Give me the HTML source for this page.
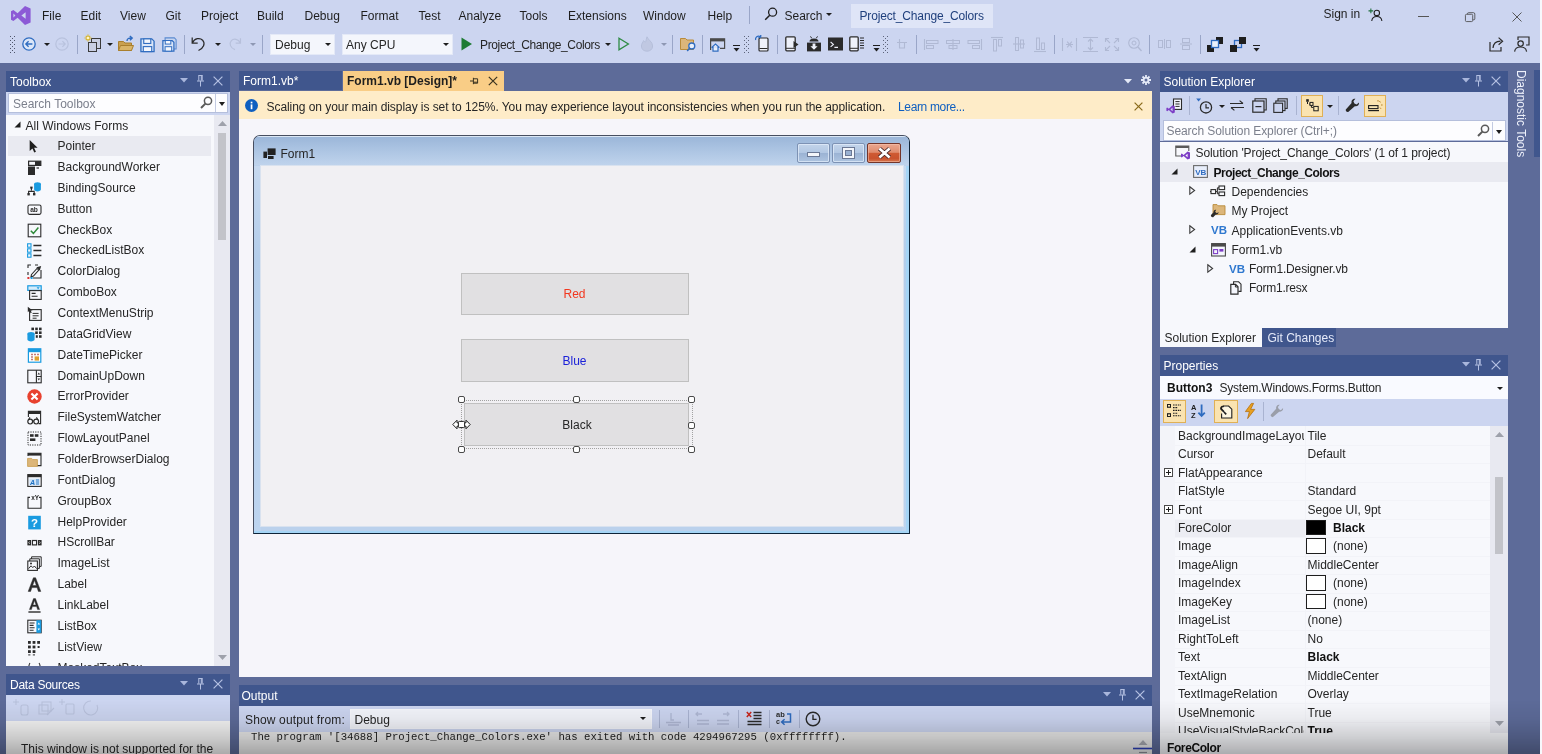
<!DOCTYPE html>
<html>
<head>
<meta charset="utf-8">
<title>Project_Change_Colors - Microsoft Visual Studio</title>
<style>
*{box-sizing:border-box;margin:0;padding:0}
html,body{width:1542px;height:754px;overflow:hidden}
body{font-family:"Liberation Sans",sans-serif;font-size:12px;color:#262626;background:#5d6b99;position:relative}
.a{position:absolute}
.t{position:absolute;white-space:pre;line-height:16px;height:16px}
.b{font-weight:bold;color:#111}
svg{position:absolute;overflow:visible}
#top{left:0;top:0;width:1542px;height:63px;background:#ccd5f0}
.menu .t{top:8px;color:#1e1e1e}
.sep{position:absolute;width:1px;background:#9aa6c8;top:35px;height:19px}
.combo{position:absolute;background:#f4f6fc;border:1px solid #e4e9f7;top:34px;height:21px}
.caret{position:absolute;width:0;height:0;border-left:3px solid transparent;border-right:3px solid transparent;border-top:4px solid #1e1e1e}
.ttl{position:absolute;background:#40568d;color:#fff;height:21px}
.ttl .t{top:3px;left:4px;color:#fff}
.pane{position:absolute;background:#f7f8fc}
.tb{position:absolute;background:#ccd5f0}
.row{position:absolute;left:0;height:21px;width:100%}
.row .t{left:51px;top:2px}
.h{position:absolute;width:7px;height:7px;background:#fff;border:1px solid #4a4a4a;border-radius:2px}
.gl{position:absolute;left:17px;right:0;height:1px;background:#eceef5}
</style>
</head>
<body>
<!-- TOP BAR -->
<div id="wrap" class="a" style="left:0;top:0;width:1542px;height:754px;will-change:transform">
<div id="top" class="a"></div>
<div class="a menu" style="left:0;top:0;width:1542px;height:30px">
<svg style="left:10.5px;top:5.5px" width="20" height="19" viewBox="0 0 20 19"><path d="M14 0 L19.6 2.4 V16.6 L14 19 L6.6 11.8 L2.4 15 L0 13.8 V5.2 L2.4 4 L6.6 7.2 Z" fill="#8c5ad6"/><path d="M14.6 6.2 L10.4 9.5 L14.6 12.8 Z" fill="#ccd5f0"/><path d="M2.4 7.6 V11.4 L4.4 9.5 Z" fill="#ccd5f0"/></svg>
<span class="t" style="left:42px">File</span>
<span class="t" style="left:80.5px">Edit</span>
<span class="t" style="left:120px">View</span>
<span class="t" style="left:165.5px">Git</span>
<span class="t" style="left:201px">Project</span>
<span class="t" style="left:257px">Build</span>
<span class="t" style="left:304.5px">Debug</span>
<span class="t" style="left:360.5px">Format</span>
<span class="t" style="left:418.5px">Test</span>
<span class="t" style="left:458.5px">Analyze</span>
<span class="t" style="left:519.5px">Tools</span>
<span class="t" style="left:568px">Extensions</span>
<span class="t" style="left:643px">Window</span>
<span class="t" style="left:707.5px">Help</span>
<div class="a" style="left:749px;top:6px;width:1px;height:18px;background:#9aa6c8"></div>
<svg style="left:764px;top:7px" width="14" height="14" viewBox="0 0 14 14"><circle cx="8.6" cy="5.2" r="4" fill="none" stroke="#1e1e1e" stroke-width="1.3"/><path d="M5.7 8.2 L1.2 12.8" stroke="#1e1e1e" stroke-width="1.5" fill="none"/></svg>
<span class="t" style="left:784.5px">Search</span>
<div class="caret" style="left:826px;top:13px;border-left-width:3px;border-right-width:3px;border-top-width:3.5px"></div>
<div class="a" style="left:851px;top:4px;width:142px;height:24px;background:#dfe5f7"></div>
<span class="t" style="left:859.5px;color:#1f3f7c;letter-spacing:-.15px">Project_Change_Colors</span>
<span class="t" style="left:1323.5px;top:6px">Sign in</span>
<svg style="left:1368px;top:8px" width="15" height="14" viewBox="0 0 17 16"><circle cx="10" cy="5.6" r="3.1" fill="none" stroke="#1e1e1e" stroke-width="1.2"/><path d="M4.2 14.8 C4.6 11 7 9.6 10 9.6 C13 9.6 15.4 11 15.8 14.8" fill="none" stroke="#1e1e1e" stroke-width="1.2"/><path d="M3.2 0.6 V6 M0.5 3.3 H5.9" stroke="#1e6e3c" stroke-width="1.2"/></svg>
<div class="a" style="left:1418px;top:16px;width:11px;height:1px;background:#555"></div>
<svg style="left:1465px;top:12px" width="11" height="10.5" viewBox="0 0 13 12"><rect x="0.5" y="2.5" width="8.6" height="8.6" rx="1.3" fill="none" stroke="#4a4a4a" stroke-width="1"/><path d="M3 2.4 V1.8 Q3 .6 4.2 .6 H10 Q11.6 .6 11.6 2.2 V8 Q11.6 9 10.4 9 H9.3" fill="none" stroke="#4a4a4a" stroke-width="1"/></svg>
<svg style="left:1512px;top:12px" width="10" height="10" viewBox="0 0 12 12"><path d="M.6 .6 L11.4 11.4 M11.4 .6 L.6 11.4" stroke="#4a4a4a" stroke-width="1.1"/></svg>
</div>
<div class="a" id="toolbar" style="left:0;top:0;width:1542px;height:63px">
<!-- grip -->
<svg style="left:10px;top:36px" width="5" height="17" viewBox="0 0 5 17"><g fill="#4f566b"><rect x="0" y="0" width="1" height="1"/><rect x="4" y="0" width="1" height="1"/><rect x="2" y="2" width="1" height="1"/><rect x="0" y="4" width="1" height="1"/><rect x="4" y="4" width="1" height="1"/><rect x="2" y="6" width="1" height="1"/><rect x="0" y="8" width="1" height="1"/><rect x="4" y="8" width="1" height="1"/><rect x="2" y="10" width="1" height="1"/><rect x="0" y="12" width="1" height="1"/><rect x="4" y="12" width="1" height="1"/><rect x="2" y="14" width="1" height="1"/><rect x="0" y="16" width="1" height="1"/><rect x="4" y="16" width="1" height="1"/></g></svg>
<!-- back -->
<svg style="left:22px;top:37px" width="14" height="14" viewBox="0 0 14 14"><circle cx="7" cy="7" r="6.2" fill="#dbe6f8" stroke="#2f6cc0" stroke-width="1.3"/><path d="M10.4 7 H3.9 M6.6 4.2 L3.8 7 L6.6 9.8" fill="none" stroke="#2f6cc0" stroke-width="1.3"/></svg>
<div class="caret" style="left:43.5px;top:43px;border-left-width:3px;border-right-width:3px;border-top-width:3.5px"></div>
<svg style="left:55px;top:37px" width="14" height="14" viewBox="0 0 14 14" opacity=".55"><circle cx="7" cy="7" r="6.2" fill="none" stroke="#a9b3cf" stroke-width="1.2"/><path d="M3.6 7 H10.1 M7.4 4.2 L10.2 7 L7.4 9.8" fill="none" stroke="#a9b3cf" stroke-width="1.2"/></svg>
<div class="sep" style="left:77px"></div>
<!-- new project -->
<svg style="left:85px;top:35px" width="17" height="18" viewBox="0 0 17 18"><rect x="6.5" y="3.5" width="9" height="10" fill="#c9cfe3" stroke="#3a3a3a" stroke-width="1"/><rect x="3.5" y="7.5" width="8" height="9" fill="#c9cfe3" stroke="#3a3a3a" stroke-width="1"/><path d="M3 -.5 V6.5 M-.5 3 H6.5 M.8 .8 L5.2 5.2 M5.2 .8 L.8 5.2" stroke="#d9b424" stroke-width="1.1"/><circle cx="3" cy="3" r="1.3" fill="#fff6c8"/></svg>
<div class="caret" style="left:107px;top:43px;border-left-width:3px;border-right-width:3px;border-top-width:3.5px"></div>
<!-- open -->
<svg style="left:118px;top:36px" width="17" height="16" viewBox="0 0 17 16"><path d="M0.5 5.5 H5.5 L7 7 H13.5 V14.5 H0.5 Z" fill="#c9a050" stroke="#a97f2e" stroke-width="1"/><path d="M2.5 9.5 H15.5 L13.5 14.5 H0.5 Z" fill="#d9b468" stroke="#a97f2e" stroke-width="1"/><path d="M9 5 C9 2.5 11 1.8 13.5 2 M11.8 0 L14.2 2 L12 4.3" fill="none" stroke="#2f6cc0" stroke-width="1.4"/></svg>
<!-- save -->
<svg style="left:140px;top:37.5px" width="15" height="14.5" viewBox="0 0 16 16" preserveAspectRatio="none"><path d="M1 1 H12.5 L15 3.5 V15 H1 Z" fill="#dbe6f8" stroke="#2f6cc0" stroke-width="1.4"/><rect x="4" y="1" width="7.5" height="5" fill="#f4f7fd" stroke="#2f6cc0" stroke-width="1.2"/><rect x="3.5" y="9.5" width="9" height="5.5" fill="#f4f7fd" stroke="#2f6cc0" stroke-width="1.2"/></svg>
<!-- save all -->
<svg style="left:162px;top:37px" width="15" height="15" viewBox="0 0 17 17" preserveAspectRatio="none"><path d="M3.5 3.5 V1 H14 L16 3 V13.5 H13.5" fill="#c6d5f0" stroke="#5a8ad0" stroke-width="1.2"/><path d="M1 4 H11.5 L13.5 6 V16 H1 Z" fill="#dbe6f8" stroke="#2f6cc0" stroke-width="1.4"/><rect x="3.7" y="4" width="6.3" height="4" fill="#f4f7fd" stroke="#2f6cc0" stroke-width="1.1"/><rect x="3.5" y="11" width="7.5" height="5" fill="#f4f7fd" stroke="#2f6cc0" stroke-width="1.1"/></svg>
<div class="sep" style="left:184px"></div>
<!-- undo -->
<svg style="left:191px;top:36px" width="16" height="16" viewBox="0 0 16 16"><path d="M1.2 1.5 V7 H6.7 M1.6 6.6 C3.5 2.2 9 1.4 11.6 4.2 C14.6 7.6 12.6 12.4 7.5 14.5" fill="none" stroke="#2b2b2b" stroke-width="1.25"/></svg>
<div class="caret" style="left:214.5px;top:43px;border-left-width:3px;border-right-width:3px;border-top-width:3.5px"></div>
<svg style="left:227px;top:37px" width="15" height="14" viewBox="0 0 16 16" opacity=".5"><path d="M14.8 1.5 V7 H9.3 M14.4 6.6 C12.5 2.2 7 1.4 4.4 4.2 C1.4 7.6 3.4 12.4 8.5 14.5" fill="none" stroke="#a3adc8" stroke-width="1.4"/></svg>
<div class="caret" style="left:249.5px;top:43px;border-left-width:3px;border-right-width:3px;border-top-width:3.5px;border-top-color:#8e98b3"></div>
<div class="sep" style="left:262px"></div>
<div class="combo" style="left:270px;width:65px"></div>
<span class="t" style="left:275px;top:37px">Debug</span>
<div class="caret" style="left:325px;top:43px;border-left-width:3px;border-right-width:3px;border-top-width:3.5px"></div>
<div class="combo" style="left:342px;width:111px"></div>
<span class="t" style="left:346px;top:37px">Any CPU</span>
<div class="caret" style="left:442.5px;top:43px;border-left-width:3px;border-right-width:3px;border-top-width:3.5px"></div>
<svg style="left:461px;top:37px" width="12" height="14" viewBox="0 0 12 14"><path d="M.5 .5 L11 7 L.5 13.5 Z" fill="#1e7b34"/></svg>
<span class="t" style="left:480px;top:37px;letter-spacing:-.36px">Project_Change_Colors</span>
<div class="caret" style="left:604.5px;top:43px;border-left-width:3px;border-right-width:3px;border-top-width:3.5px"></div>
<svg style="left:618px;top:37px" width="12" height="14" viewBox="0 0 12 14"><path d="M1 1.2 L10.4 7 L1 12.8 Z" fill="none" stroke="#2e8b44" stroke-width="1.3"/></svg>
<svg style="left:640px;top:36px" width="14" height="16" viewBox="0 0 14 16" opacity=".6"><path d="M7 .8 C8 4 12.6 5.6 12.6 10 C12.6 13.4 10 15.2 7 15.2 C4 15.2 1.4 13.4 1.4 10 C1.4 7.6 3 6.4 3.6 4.6 C4.6 6 5.4 6.2 5.8 5.6 C6.4 4.4 6.2 2.4 7 .8 Z" fill="#b9c1da" stroke="#a6b0cc" stroke-width="1"/></svg>
<div class="caret" style="left:660.5px;top:43px;border-left-width:3px;border-right-width:3px;border-top-width:3.5px;border-top-color:#8e98b3"></div>
<div class="sep" style="left:672px"></div>
<!-- folder search -->
<svg style="left:680px;top:36px" width="17" height="16" viewBox="0 0 17 16"><path d="M.5 2.5 H5.5 L7 4 H13.5 V13.5 H.5 Z" fill="#dcb67a" stroke="#b98b3a" stroke-width="1"/><circle cx="11.8" cy="10" r="3" fill="#e9f0fb" stroke="#2f6cc0" stroke-width="1.3"/><path d="M9.6 12.2 L7.2 15" stroke="#2f6cc0" stroke-width="1.5"/></svg>
<div class="sep" style="left:702px"></div>
<!-- window/home -->
<svg style="left:710px;top:38px" width="16" height="14" viewBox="0 0 16 14"><path d="M.6 12 V.8 H14.6 V10.4 H10" fill="none" stroke="#4a4a4a" stroke-width="1.2"/><rect x=".6" y=".8" width="14" height="2.6" fill="#4a4a4a"/><path d="M1.5 9.6 L5.5 6 L9.5 9.6 M3 8.6 V13.2 H8 V8.6" fill="#e9f0fb" stroke="#2f6cc0" stroke-width="1.2"/></svg>
<svg style="left:733px;top:45px" width="7" height="7" viewBox="0 0 7 7"><path d="M0 .5 H7" stroke="#1e1e1e" stroke-width="1"/><path d="M.5 3 H6.5 L3.5 6.5 Z" fill="#1e1e1e"/></svg>
<svg style="left:743.5px;top:36px" width="5" height="17" viewBox="0 0 5 17"><g fill="#5d647a"><rect x="0" y="0" width="1" height="1"/><rect x="4" y="0" width="1" height="1"/><rect x="2" y="2" width="1" height="1"/><rect x="0" y="4" width="1" height="1"/><rect x="4" y="4" width="1" height="1"/><rect x="2" y="6" width="1" height="1"/><rect x="0" y="8" width="1" height="1"/><rect x="4" y="8" width="1" height="1"/><rect x="2" y="10" width="1" height="1"/><rect x="0" y="12" width="1" height="1"/><rect x="4" y="12" width="1" height="1"/><rect x="2" y="14" width="1" height="1"/><rect x="0" y="16" width="1" height="1"/><rect x="4" y="16" width="1" height="1"/></g></svg>
<!-- phone refresh -->
<svg style="left:754px;top:35px" width="15" height="17" viewBox="0 0 15 17"><rect x="5" y="3" width="9" height="13" rx="1" fill="#eef1fa" stroke="#2b2b2b" stroke-width="1.2"/><path d="M5.5 13.5 H13.5" stroke="#2b2b2b" stroke-width="1"/><path d="M6.4 1.6 C3.6 .4 1 2.2 1.6 5 M6.8 0 L6.6 2.2 L4.4 2.6" fill="none" stroke="#2f6cc0" stroke-width="1.3"/></svg>
<div class="sep" style="left:777px"></div>
<svg style="left:785px;top:36px" width="14" height="16" viewBox="0 0 14 16"><rect x=".8" y=".8" width="9.4" height="14" rx="1" fill="#eef1fa" stroke="#2b2b2b" stroke-width="1.3"/><path d="M1 12.3 H10" stroke="#2b2b2b" stroke-width="1"/><path d="M8.5 5 L13.5 8.5 L8.5 12 Z" fill="#2b2b2b"/></svg>
<svg style="left:806px;top:36px" width="16" height="16" viewBox="0 0 16 16"><path d="M3.4 5.6 C3.4 1.6 12.6 1.6 12.6 5.6 Z" fill="#2b2b2b"/><path d="M4.5 .4 L5.8 2.4 M11.5 .4 L10.2 2.4" stroke="#2b2b2b" stroke-width="1"/><rect x="1" y="6.6" width="14" height="8.8" fill="#2b2b2b"/><path d="M6.6 7.6 H9.4 V10.2 H11.6 L8 13.8 L4.4 10.2 H6.6 Z" fill="#eef1fa"/></svg>
<svg style="left:828px;top:37px" width="15" height="14" viewBox="0 0 15 14"><rect x="0" y=".5" width="15" height="13" fill="#2b2b2b"/><path d="M2.6 5 L5.4 7.4 L2.6 9.8 M6.4 10.4 H10" fill="none" stroke="#eef1fa" stroke-width="1.1"/></svg>
<svg style="left:849px;top:36px" width="15" height="16" viewBox="0 0 15 16"><rect x=".8" y=".8" width="8.4" height="14" rx="1" fill="#eef1fa" stroke="#2b2b2b" stroke-width="1.3"/><path d="M1 12.3 H9" stroke="#2b2b2b" stroke-width="1"/><path d="M11 2 H15 M11 4.5 H15 M11 7 H15 M11 9.5 H15 M11 12 H15" stroke="#2b2b2b" stroke-width="1.2"/></svg>
<svg style="left:872.5px;top:45px" width="7" height="7" viewBox="0 0 7 7"><path d="M0 .5 H7" stroke="#1e1e1e" stroke-width="1"/><path d="M.5 3 H6.5 L3.5 6.5 Z" fill="#1e1e1e"/></svg>
<svg style="left:882.5px;top:36px" width="5" height="17" viewBox="0 0 5 17"><g fill="#5d647a"><rect x="0" y="0" width="1" height="1"/><rect x="4" y="0" width="1" height="1"/><rect x="2" y="2" width="1" height="1"/><rect x="0" y="4" width="1" height="1"/><rect x="4" y="4" width="1" height="1"/><rect x="2" y="6" width="1" height="1"/><rect x="0" y="8" width="1" height="1"/><rect x="4" y="8" width="1" height="1"/><rect x="2" y="10" width="1" height="1"/><rect x="0" y="12" width="1" height="1"/><rect x="4" y="12" width="1" height="1"/><rect x="2" y="14" width="1" height="1"/><rect x="0" y="16" width="1" height="1"/><rect x="4" y="16" width="1" height="1"/></g></svg>
<!-- disabled layout icons -->
<svg style="left:897px;top:39px" width="10" height="10" viewBox="0 0 10 10"><path d="M0 3.5 H10 M2.5 0 V3.5 M2.5 3.5 V9 H7.5 V3.5" fill="none" stroke="#b0b9d4" stroke-width="1.1"/></svg>
<div class="sep" style="left:916px"></div>
<svg style="left:924px;top:39px" width="15" height="11" viewBox="0 0 15 11"><path d="M.5 0 V11" stroke="#b0b9d4" stroke-width="1.1"/><rect x="2.5" y="1.5" width="11.5" height="3" fill="none" stroke="#b0b9d4"/><rect x="2.5" y="6.5" width="7" height="3" fill="none" stroke="#b0b9d4"/></svg>
<svg style="left:946px;top:39px" width="14" height="11" viewBox="0 0 14 11"><path d="M7 0 V11" stroke="#b0b9d4" stroke-width="1.1"/><rect x=".5" y="1.5" width="13" height="3" fill="none" stroke="#b0b9d4"/><rect x="3" y="6.5" width="8" height="3" fill="none" stroke="#b0b9d4"/></svg>
<svg style="left:967px;top:39px" width="15" height="11" viewBox="0 0 15 11"><path d="M14.5 0 V11" stroke="#b0b9d4" stroke-width="1.1"/><rect x="1" y="1.5" width="11.5" height="3" fill="none" stroke="#b0b9d4"/><rect x="5.5" y="6.5" width="7" height="3" fill="none" stroke="#b0b9d4"/></svg>
<svg style="left:991px;top:37px" width="12" height="15" viewBox="0 0 12 15"><path d="M0 .5 H12" stroke="#b0b9d4" stroke-width="1.1"/><rect x="2.5" y="2.5" width="3" height="11.5" fill="none" stroke="#b0b9d4"/><rect x="7.5" y="2.5" width="3" height="6.5" fill="none" stroke="#b0b9d4"/></svg>
<svg style="left:1013px;top:37px" width="12" height="14" viewBox="0 0 12 14"><path d="M0 7 H12" stroke="#b0b9d4" stroke-width="1.1"/><rect x="2.5" y=".5" width="3" height="13" fill="none" stroke="#b0b9d4"/><rect x="7.5" y="3" width="3" height="8" fill="none" stroke="#b0b9d4"/></svg>
<svg style="left:1034px;top:37px" width="12" height="15" viewBox="0 0 12 15"><path d="M0 14.5 H12" stroke="#b0b9d4" stroke-width="1.1"/><rect x="2.5" y="1" width="3" height="11.5" fill="none" stroke="#b0b9d4"/><rect x="7.5" y="6" width="3" height="6.5" fill="none" stroke="#b0b9d4"/></svg>
<div class="sep" style="left:1054px"></div>
<svg style="left:1062px;top:38px" width="15" height="13" viewBox="0 0 15 13"><path d="M.5 0 V13 M14.5 0 V13 M4 6.5 H11 M5.2 3.6 L9.8 9.4 M9.8 3.6 L5.2 9.4" stroke="#b0b9d4" stroke-width="1.1" fill="none"/></svg>
<svg style="left:1083px;top:37px" width="15" height="15" viewBox="0 0 15 15"><path d="M0 .5 H15 M0 14.5 H15 M7.5 2 V13 M5 4.5 L7.5 2 L10 4.5 M5 10.5 L7.5 13 L10 10.5" stroke="#b0b9d4" stroke-width="1.1" fill="none"/></svg>
<svg style="left:1105px;top:38px" width="14" height="13" viewBox="0 0 14 13"><path d="M.5 4 V.5 H4 M10 .5 H13.5 V4 M13.5 9 V12.5 H10 M4 12.5 H.5 V9 M.8 .8 L5 5 M13.2 .8 L9 5 M13.2 12.2 L9 8 M.8 12.2 L5 8" stroke="#b0b9d4" stroke-width="1.1" fill="none"/></svg>
<svg style="left:1128px;top:37px" width="14" height="15" viewBox="0 0 14 15"><circle cx="6" cy="6" r="5.3" fill="none" stroke="#b0b9d4" stroke-width="1.1"/><path d="M10 10 L13.5 14" stroke="#b0b9d4" stroke-width="1.4"/><circle cx="6" cy="6" r="2" fill="none" stroke="#b0b9d4"/></svg>
<div class="sep" style="left:1149px"></div>
<svg style="left:1158px;top:39px" width="13" height="10" viewBox="0 0 13 10"><rect x=".5" y="1.5" width="4" height="7" fill="none" stroke="#b0b9d4"/><rect x="8.5" y="1.5" width="4" height="7" fill="none" stroke="#b0b9d4"/><path d="M6.5 0 V10" stroke="#b0b9d4"/></svg>
<svg style="left:1180px;top:38px" width="12" height="12" viewBox="0 0 12 12"><rect x="2.5" y=".5" width="7" height="4" fill="none" stroke="#b0b9d4"/><rect x="2.5" y="7.5" width="7" height="4" fill="none" stroke="#b0b9d4"/><path d="M0 6 H12" stroke="#b0b9d4"/></svg>
<div class="sep" style="left:1200px"></div>
<svg style="left:1207px;top:37px" width="16" height="15" viewBox="0 0 16 15"><rect x="9" y="0" width="7" height="7" fill="#1e1e1e"/><rect x="0" y="8" width="7" height="7" fill="#1e1e1e"/><rect x="4.5" y="3.5" width="7" height="7" fill="#e9f0fb" stroke="#2f6cc0" stroke-width="1.3"/></svg>
<svg style="left:1230px;top:37px" width="16" height="15" viewBox="0 0 16 15"><rect x="4.5" y="3.5" width="7" height="7" fill="none" stroke="#2f6cc0" stroke-width="1.3"/><rect x="9" y="0" width="7" height="7" fill="#1e1e1e"/><rect x="0" y="8" width="7" height="7" fill="#1e1e1e"/></svg>
<svg style="left:1253px;top:45px" width="7" height="7" viewBox="0 0 7 7"><path d="M0 .5 H7" stroke="#1e1e1e" stroke-width="1"/><path d="M.5 3 H6.5 L3.5 6.5 Z" fill="#1e1e1e"/></svg>
<!-- share / feedback -->
<svg style="left:1489px;top:36px" width="16" height="16" viewBox="0 0 16 16"><path d="M1 6 V15 H12 V11" fill="none" stroke="#2b2b2b" stroke-width="1.2"/><path d="M4 12 C4.5 7 8 5.2 11.5 5.2 M9.6 1.6 L13.6 5.2 L9.6 8.8" fill="none" stroke="#2b2b2b" stroke-width="1.2"/></svg>
<svg style="left:1513px;top:36px" width="17" height="16" viewBox="0 0 17 16"><path d="M5 4 V1 H16 V9 H13" fill="none" stroke="#2b2b2b" stroke-width="1.2"/><circle cx="7.6" cy="7.6" r="2.7" fill="none" stroke="#2b2b2b" stroke-width="1.2"/><path d="M1.6 15.6 C2 12 4.6 11 7.6 11 C10.6 11 13.2 12 13.6 15.6" fill="none" stroke="#2b2b2b" stroke-width="1.2"/></svg>
</div>
<div class="a" id="toolbox" style="left:6px;top:71px;width:224px;height:594.5px;overflow:hidden">
<div class="ttl" style="left:0;top:0;width:224px"><span class="t">Toolbox</span></div>
<svg style="left:174px;top:7px" width="8" height="5" viewBox="0 0 8 5"><path d="M0 0 H8 L4 4.6 Z" fill="#a9b6dc"/></svg>
<svg style="left:191px;top:4px" width="7" height="12" viewBox="0 0 7 12"><path d="M1.4 .5 H5.6 M1.8 .5 V5.6 M5.2 .5 V5.6 M0 6 H7 M3.5 6 V11.5 M4.3 .5 V5.6" fill="none" stroke="#b4c0e2" stroke-width="1"/></svg>
<svg style="left:207px;top:5px" width="10" height="10" viewBox="0 0 10 10"><path d="M.6 .6 L9.4 9.4 M9.4 .6 L.6 9.4" stroke="#b4c0e2" stroke-width="1.2"/></svg>
<div class="tb" style="left:0;top:21px;width:224px;height:23px"></div>
<div class="a" style="left:2px;top:22px;width:220px;height:20px;background:#fdfdff;border:1px solid #b5bfdc"></div>
<span class="t" style="left:7px;top:25px;color:#7b7f8c">Search Toolbox</span>
<svg style="left:194px;top:25px" width="13" height="13" viewBox="0 0 13 13"><circle cx="8" cy="4.8" r="3.6" fill="none" stroke="#5a5a5a" stroke-width="1.5"/><path d="M5.4 7.6 L1 12" stroke="#5a5a5a" stroke-width="2"/></svg>
<div class="a" style="left:209px;top:23px;width:1px;height:18px;background:#c3cbe2"></div>
<div class="caret" style="left:212.5px;top:31px"></div>
<div class="pane" style="left:0;top:44px;width:224px;height:551px"></div>
<div class="a" style="left:207.5px;top:44px;width:16.5px;height:551px;background:#e8e9f1"></div>
<div class="a" style="left:211.5px;top:62px;width:8px;height:107px;background:#c2c3c9"></div>
<svg style="left:211.5px;top:50px" width="9" height="5" viewBox="0 0 9 5"><path d="M0 5 L4.5 0 L9 5 Z" fill="#9ea1ab"/></svg>
<svg style="left:211.5px;top:584px" width="9" height="5" viewBox="0 0 9 5"><path d="M0 0 L4.5 5 L9 0 Z" fill="#9ea1ab"/></svg>
<svg style="left:8px;top:50px" width="7" height="7" viewBox="0 0 7 7"><path d="M6.5 .5 V6.5 H.5 Z" fill="#1e1e1e"/></svg>
<span class="t" style="left:19.5px;top:47px">All Windows Forms</span>
<div class="a" style="left:2px;top:64.5px;width:203px;height:20px;background:#e9eaf1"></div>
<svg style="left:20.5px;top:68.1px" width="15" height="15" viewBox="0 0 15 15"><path d="M4 1 V13 L7 10.2 L9 14.6 L10.8 13.8 L8.8 9.6 H12.6 Z" fill="#1e1e1e" transform="translate(-1,0) scale(.92)"/></svg><span class="t" style="left:51.5px;top:67.1px">Pointer</span>
<svg style="left:20.5px;top:89.0px" width="15" height="15" viewBox="0 0 15 15"><rect x="1" y="6.5" width="7" height="8.5" fill="#2b2b2b"/><rect x="1.6" y="1.2" width="12.2" height="4.2" fill="none" stroke="#2b2b2b" stroke-width="1.2"/><rect x="8" y="1.2" width="5.8" height="4.2" fill="#2b2b2b"/><path d="M9.5 8 H12" stroke="#2b2b2b" stroke-width="1.2"/></svg><span class="t" style="left:51.5px;top:88.0px">BackgroundWorker</span>
<svg style="left:20.5px;top:109.8px" width="15" height="15" viewBox="0 0 15 15"><ellipse cx="10.5" cy="3" rx="3.4" ry="1.8" fill="#1a9be0"/><path d="M7.1 3 V8.6 C7.1 11 13.9 11 13.9 8.6 V3 Z" fill="#1a9be0"/><path d="M4.4 7 V9.6 M1.6 12.4 V10.4 H7.2 V12.4" fill="none" stroke="#2b2b2b" stroke-width="1.1"/><rect x="3.2" y="5.6" width="2.4" height="2" fill="#2b2b2b"/><rect x=".4" y="12" width="2.4" height="2.4" fill="#2b2b2b"/><rect x="6" y="12" width="2.4" height="2.4" fill="#2b2b2b"/></svg><span class="t" style="left:51.5px;top:108.8px">BindingSource</span>
<svg style="left:20.5px;top:130.7px" width="15" height="15" viewBox="0 0 15 15"><rect x="1" y="3" width="13" height="9.4" rx="1.6" fill="none" stroke="#2b2b2b" stroke-width="1.1"/><text x="3.2" y="10.3" font-family="Liberation Sans" font-size="6.6" font-weight="bold" fill="#2b2b2b">ab</text></svg><span class="t" style="left:51.5px;top:129.7px">Button</span>
<svg style="left:20.5px;top:151.5px" width="15" height="15" viewBox="0 0 15 15"><rect x="1.2" y="1.2" width="12.6" height="12.6" fill="none" stroke="#2b2b2b" stroke-width="1.1"/><path d="M3.8 7.8 L6.4 10.4 L11.4 4.6" fill="none" stroke="#2f8a3a" stroke-width="1.5"/></svg><span class="t" style="left:51.5px;top:150.5px">CheckBox</span>
<svg style="left:20.5px;top:172.4px" width="15" height="15" viewBox="0 0 15 15"><rect x=".6" y=".8" width="3.4" height="3.4" fill="none" stroke="#1a9be0" stroke-width="1.1"/><rect x=".6" y="5.8" width="3.4" height="3.4" fill="none" stroke="#1a9be0" stroke-width="1.1"/><rect x=".6" y="10.8" width="3.4" height="3.4" fill="none" stroke="#1a9be0" stroke-width="1.1"/><path d="M6.4 2.5 H14.4 M6.4 7.5 H14.4 M6.4 12.5 H14.4" stroke="#2b2b2b" stroke-width="1.7"/></svg><span class="t" style="left:51.5px;top:171.4px">CheckedListBox</span>
<svg style="left:20.5px;top:193.2px" width="15" height="15" viewBox="0 0 15 15"><path d="M1 4 V1 H4 M8 1 H11 M1 8 V11" fill="none" stroke="#2b2b2b" stroke-width="1.1"/><path d="M14 6 V14 H6" fill="none" stroke="#2b2b2b" stroke-width="1.1"/><path d="M4.5 10.5 L10 4.4 L11.8 6 L6.4 12 L4 12.8 Z" fill="none" stroke="#2b2b2b" stroke-width="1.1"/><path d="M9.4 3.2 L12.8 6.6 L14.2 2 Z" fill="#2b2b2b"/><rect x=".4" y="13" width="2" height="2" fill="#d33"/><rect x="3.6" y="13" width="2" height="2" fill="#1a9be0"/></svg><span class="t" style="left:51.5px;top:192.2px">ColorDialog</span>
<svg style="left:20.5px;top:214.1px" width="15" height="15" viewBox="0 0 15 15"><rect x=".8" y=".8" width="13.4" height="4.6" fill="#d6ecfa" stroke="#1a9be0" stroke-width="1.2"/><path d="M9.6 2.2 H12.6 L11.1 4.2 Z" fill="#1a9be0"/><rect x="2.6" y="5.6" width="11.6" height="8.8" fill="none" stroke="#2b2b2b" stroke-width="1.1"/><path d="M4.6 8.4 H8.6 M4.6 11.2 H10.6" stroke="#2b2b2b" stroke-width="1.1"/></svg><span class="t" style="left:51.5px;top:213.1px">ComboBox</span>
<svg style="left:20.5px;top:234.9px" width="15" height="15" viewBox="0 0 15 15"><rect x="2.6" y="3.6" width="11.6" height="10.8" fill="none" stroke="#2b2b2b" stroke-width="1.1"/><path d="M.8 .8 L.8 6.2 L2.4 4.8 L3.6 7.2 L4.8 6.6 L3.6 4.4 H5.6 Z" fill="#2b2b2b"/><path d="M5.6 7.4 H11.6 M5.6 9.8 H11.6 M5.6 12.2 H9.6" stroke="#2b2b2b" stroke-width="1"/></svg><span class="t" style="left:51.5px;top:233.9px">ContextMenuStrip</span>
<svg style="left:20.5px;top:255.8px" width="15" height="15" viewBox="0 0 15 15"><g fill="#2b2b2b"><rect x="4.4" y=".6" width="2.6" height="2.6"/><rect x="8.2" y=".6" width="2.6" height="2.6"/><rect x="12" y=".6" width="2.6" height="2.6"/><rect x="8.2" y="4.4" width="2.6" height="2.6"/><rect x="12" y="4.4" width="2.6" height="2.6"/><rect x="12" y="8.2" width="2.6" height="2.6"/><rect x="8.8" y="8.2" width="2" height="2.6"/></g><ellipse cx="4" cy="6.8" rx="3.6" ry="1.8" fill="#1a9be0"/><path d="M.4 6.8 V12.6 C.4 15 7.6 15 7.6 12.6 V6.8 Z" fill="#1a9be0"/></svg><span class="t" style="left:51.5px;top:254.8px">DataGridView</span>
<svg style="left:20.5px;top:276.6px" width="15" height="15" viewBox="0 0 15 15"><rect x="1.4" y=".8" width="12.4" height="13.4" fill="#fff" stroke="#1a9be0" stroke-width="1.2"/><rect x="1.4" y=".8" width="12.4" height="3.4" fill="#1a9be0"/><path d="M4 6.5 H6 M7 6.5 H9 M10 6.5 H12 M4 9 H6 M4 11.5 H6" stroke="#c27a7a" stroke-width="1.3"/><rect x="7.6" y="8.4" width="4.4" height="4.2" fill="#e0a030"/></svg><span class="t" style="left:51.5px;top:275.6px">DateTimePicker</span>
<svg style="left:20.5px;top:297.5px" width="15" height="15" viewBox="0 0 15 15"><rect x=".8" y="1.2" width="13.4" height="12.6" fill="none" stroke="#2b2b2b" stroke-width="1.1"/><path d="M9.4 1.2 V13.8 M9.4 7.5 H14.2" stroke="#2b2b2b" stroke-width="1.1"/><path d="M10.6 5.6 L11.8 3.6 L13 5.6 Z M10.6 9.6 L11.8 11.6 L13 9.6 Z" fill="#2b2b2b"/></svg><span class="t" style="left:51.5px;top:296.5px">DomainUpDown</span>
<svg style="left:20.5px;top:318.3px" width="15" height="15" viewBox="0 0 15 15"><circle cx="7.5" cy="7.5" r="7.2" fill="#e8412e"/><path d="M4.4 4.4 L10.6 10.6 M10.6 4.4 L4.4 10.6" stroke="#fff" stroke-width="2.1"/></svg><span class="t" style="left:51.5px;top:317.3px">ErrorProvider</span>
<svg style="left:20.5px;top:339.2px" width="15" height="15" viewBox="0 0 15 15"><path d="M1.4 7 V1.4 H13.6 V13.6 H11.6" fill="none" stroke="#2b2b2b" stroke-width="1.1"/><rect x="1.4" y="1.4" width="12.2" height="2.6" fill="#2b2b2b"/><circle cx="3.2" cy="11.6" r="2.4" fill="none" stroke="#2b2b2b" stroke-width="1.2"/><circle cx="9.2" cy="11.6" r="2.4" fill="none" stroke="#2b2b2b" stroke-width="1.2"/><path d="M5.4 11 H7 M1.4 10 L3 7.4 M11 10 L9.4 7.4" stroke="#2b2b2b" stroke-width="1.1"/></svg><span class="t" style="left:51.5px;top:338.2px">FileSystemWatcher</span>
<svg style="left:20.5px;top:360.1px" width="15" height="15" viewBox="0 0 15 15"><rect x="1" y="1" width="13" height="13" fill="none" stroke="#2b2b2b" stroke-width="1" stroke-dasharray="1.2 1.2"/><rect x="3" y="3.2" width="3.6" height="2.6" fill="#2b2b2b"/><rect x="7.8" y="3.2" width="3.6" height="2.6" fill="#2b2b2b"/><rect x="3" y="7.4" width="5.4" height="2.6" fill="#2b2b2b"/></svg><span class="t" style="left:51.5px;top:359.1px">FlowLayoutPanel</span>
<svg style="left:20.5px;top:380.9px" width="15" height="15" viewBox="0 0 15 15"><path d="M1 4 V1.2 H14 V13.6 H10" fill="none" stroke="#2b2b2b" stroke-width="1.1"/><rect x="1" y="1.2" width="13" height="2.4" fill="#2b2b2b"/><path d="M.6 6.4 H4.6 L5.8 7.6 H10.4 V14.4 H.6 Z" fill="#dcb67a" stroke="#c79a4a" stroke-width=".8"/></svg><span class="t" style="left:51.5px;top:379.9px">FolderBrowserDialog</span>
<svg style="left:20.5px;top:401.8px" width="15" height="15" viewBox="0 0 15 15"><rect x=".8" y="1.6" width="13.4" height="11.8" fill="none" stroke="#2b2b2b" stroke-width="1.1"/><rect x=".8" y="1.6" width="13.4" height="2.6" fill="#2b2b2b"/><rect x="2.4" y="5.6" width="10.4" height="6.6" fill="#cfe3f7"/><text x="3" y="11.8" font-family="Liberation Sans" font-size="7" font-style="italic" font-weight="bold" fill="#1d6fc0">A</text><path d="M9 7 H12 M9 9 H12 M9 11 H12" stroke="#1d6fc0" stroke-width=".9"/></svg><span class="t" style="left:51.5px;top:400.8px">FontDialog</span>
<svg style="left:20.5px;top:422.6px" width="15" height="15" viewBox="0 0 15 15"><path d="M3 3.4 H1 V14.2 H14 V3.4 H12" fill="none" stroke="#2b2b2b" stroke-width="1.1"/><text x="4.2" y="5.6" font-family="Liberation Sans" font-size="6.4" font-weight="bold" fill="#2b2b2b">xY</text></svg><span class="t" style="left:51.5px;top:421.6px">GroupBox</span>
<svg style="left:20.5px;top:443.5px" width="15" height="15" viewBox="0 0 15 15"><rect x="1.2" y=".8" width="12.6" height="13.6" fill="#1a9be0"/><text x="4.1" y="12" font-family="Liberation Sans" font-size="11.5" font-weight="bold" fill="#fff">?</text></svg><span class="t" style="left:51.5px;top:442.5px">HelpProvider</span>
<svg style="left:20.5px;top:464.3px" width="15" height="15" viewBox="0 0 15 15"><rect x=".4" y="5" width="3.6" height="5.4" fill="#2b2b2b"/><rect x="11" y="5" width="3.6" height="5.4" fill="#2b2b2b"/><rect x="5.4" y="5.5" width="4.2" height="4.4" fill="none" stroke="#2b2b2b" stroke-width="1.2"/><path d="M2.8 6.6 L1.6 7.7 L2.8 8.8 M12.2 6.6 L13.4 7.7 L12.2 8.8" fill="none" stroke="#fff" stroke-width=".7"/></svg><span class="t" style="left:51.5px;top:463.3px">HScrollBar</span>
<svg style="left:20.5px;top:485.2px" width="15" height="15" viewBox="0 0 15 15"><path d="M4.6 3 V.8 H14.2 V10.4 H12.4" fill="none" stroke="#2b2b2b" stroke-width="1"/><path d="M2.8 5 V2.8 H12.4 V12.4 H10.4" fill="none" stroke="#2b2b2b" stroke-width="1"/><rect x=".8" y="5" width="9.6" height="9.4" fill="#f7f8fc" stroke="#2b2b2b" stroke-width="1.1"/><path d="M1.6 12.6 L4 9.8 L5.8 11.6 L7.4 10 L9.6 12.6" fill="none" stroke="#2b2b2b" stroke-width="1"/><circle cx="4" cy="7.6" r="1" fill="#2b2b2b"/></svg><span class="t" style="left:51.5px;top:484.2px">ImageList</span>
<svg style="left:20.5px;top:506.0px" width="15" height="15" viewBox="0 0 15 15"><path d="M1.2 14.4 L6.4 .8 H8.6 L13.8 14.4 H11.4 L10.1 10.6 H4.9 L3.6 14.4 Z M5.6 8.6 H9.4 L7.5 3.2 Z" fill="#2b2b2b" fill-rule="evenodd" stroke="#2b2b2b" stroke-width=".5"/></svg><span class="t" style="left:51.5px;top:505.0px">Label</span>
<svg style="left:20.5px;top:526.9px" width="15" height="15" viewBox="0 0 15 15"><path d="M2.4 11.6 L6.5 .6 H8.5 L12.6 11.6 H10.6 L9.6 8.6 H5.4 L4.4 11.6 Z M6 7 H9 L7.5 2.6 Z" fill="#2b2b2b" fill-rule="evenodd" stroke="#2b2b2b" stroke-width=".4"/><path d="M1.4 14 H13.6" stroke="#2b2b2b" stroke-width="1.4"/></svg><span class="t" style="left:51.5px;top:525.9px">LinkLabel</span>
<svg style="left:20.5px;top:547.7px" width="15" height="15" viewBox="0 0 15 15"><rect x=".8" y="1.2" width="13.4" height="12.6" fill="none" stroke="#2b2b2b" stroke-width="1.1"/><rect x="9.4" y="1.2" width="4.8" height="12.6" fill="#1a9be0"/><path d="M10.6 5.4 L11.8 3.6 L13 5.4 Z M10.6 9.6 L11.8 11.4 L13 9.6 Z" fill="#fff"/><path d="M2.6 4 H7.6 M2.6 6.4 H6.6 M2.6 8.8 H7.6 M2.6 11.2 H6.6" stroke="#2b2b2b" stroke-width="1.1"/></svg><span class="t" style="left:51.5px;top:546.7px">ListBox</span>
<svg style="left:20.5px;top:568.6px" width="15" height="15" viewBox="0 0 15 15"><g fill="#2b2b2b"><rect x="1" y="1" width="2.8" height="2.8"/><rect x="5.6" y="1" width="2.8" height="2.8"/><rect x="10.2" y="1" width="2.8" height="2.8"/><rect x="1" y="5.6" width="2.8" height="2.8"/><rect x="5.6" y="5.6" width="2.8" height="2.8"/><rect x="1" y="10.2" width="2.8" height="2.8"/><rect x="5.6" y="10.2" width="2.8" height="2.8"/><rect x="10.6" y="6" width="2" height="2"/><rect x="1.2" y="14.4" width="2.2" height="1"/><rect x="5.8" y="14.4" width="2.2" height="1"/></g></svg><span class="t" style="left:51.5px;top:567.6px">ListView</span>
<svg style="left:20.5px;top:589.5px" width="15" height="15" viewBox="0 0 15 15"><path d="M3 2 C1.4 4 1.4 10 3 12 M12 2 C13.6 4 13.6 10 12 12 M5.4 10.6 H6.4 M8.6 10.6 H9.6" fill="none" stroke="#2b2b2b" stroke-width="1.1"/></svg><span class="t" style="left:51.5px;top:588.5px">MaskedTextBox</span>
</div>
<div class="a" id="datasrc" style="left:6px;top:674px;width:224px;height:80px;overflow:hidden">
<div class="ttl" style="left:0;top:0;width:224px"><span class="t" style="letter-spacing:-.25px">Data Sources</span></div>
<svg style="left:174px;top:7px" width="8" height="5" viewBox="0 0 8 5"><path d="M0 0 H8 L4 4.6 Z" fill="#a9b6dc"/></svg>
<svg style="left:191px;top:4px" width="7" height="12" viewBox="0 0 7 12"><path d="M1.4 .5 H5.6 M1.8 .5 V5.6 M5.2 .5 V5.6 M0 6 H7 M3.5 6 V11.5 M4.3 .5 V5.6" fill="none" stroke="#b4c0e2" stroke-width="1"/></svg>
<svg style="left:207px;top:5px" width="10" height="10" viewBox="0 0 10 10"><path d="M.6 .6 L9.4 9.4 M9.4 .6 L.6 9.4" stroke="#b4c0e2" stroke-width="1.2"/></svg>
<div class="tb" style="left:0;top:21px;width:224px;height:26px"></div>

<svg style="left:7px;top:25px" width="86" height="18" viewBox="0 0 86 18" opacity=".8"><g fill="none" stroke="#b4bdd8" stroke-width="1.1"><path d="M3 0 V6 M0 3 H6"/><rect x="8" y="6" width="7" height="10" rx="2"/><rect x="29" y="3" width="9" height="9"/><rect x="26" y="6" width="9" height="9"/><path d="M34 16 L41 9"/><path d="M49 0 V6 M46 3 H52"/><rect x="53" y="5" width="8" height="10" rx="1"/><path d="M78 2 A7 7 0 1 0 84 6"/></g></svg>
<div class="a" style="left:0;top:47px;width:224px;height:33px;background:#f5f5f5"></div>
<span class="t" style="left:15px;top:67px">This window is not supported for the</span>
</div>
<!-- DOCUMENT AREA -->
<div class="a" id="doc" style="left:238.5px;top:71px;width:913.5px;height:606px;overflow:hidden">
<!-- tab strip -->
<div class="a" style="left:0;top:0;width:103px;height:19px;background:#40568d"></div>
<span class="t" style="left:4.5px;top:2px;color:#fff">Form1.vb*</span>
<div class="a" style="left:104px;top:0;width:161px;height:20px;background:#f9cd86"></div>
<span class="t b" style="left:108.5px;top:2px;color:#1e1e1e">Form1.vb [Design]*</span>
<svg style="left:231px;top:6px" width="9" height="8" viewBox="0 0 9 8"><path d="M0 4 H3.2 M3.4 .8 V7.2 M3.4 1.8 H7.6 V6.2 H3.4 M3.4 5.2 H7.6" fill="none" stroke="#3a3320" stroke-width="1"/></svg>
<svg style="left:249px;top:5px" width="10" height="10" viewBox="0 0 10 10"><path d="M.8 .8 L9.2 9.2 M9.2 .8 L.8 9.2" stroke="#3a3320" stroke-width="1.2"/></svg>
<svg style="left:885px;top:8px" width="8" height="5" viewBox="0 0 8 5"><path d="M0 0 H8 L4 4.6 Z" fill="#e4e9f7"/></svg>
<svg style="left:902px;top:4px" width="10" height="10" viewBox="0 0 10 10"><path d="M5 0 V10 M0 5 H10 M1.5 1.5 L8.5 8.5 M8.5 1.5 L1.5 8.5" stroke="#e4e9f7" stroke-width="1.8"/><circle cx="5" cy="5" r="3.2" fill="#e4e9f7"/><circle cx="5" cy="5" r="1.5" fill="#5d6b99"/></svg>
<!-- info bar -->
<div class="a" style="left:0;top:19.5px;width:913.5px;height:28.5px;background:#feecc8"></div>
<svg style="left:6.5px;top:28px" width="13" height="13" viewBox="0 0 13 13"><circle cx="6.5" cy="6.5" r="6.5" fill="#0f5fc0"/><rect x="5.7" y="5.4" width="1.7" height="4.8" fill="#fff"/><rect x="5.7" y="2.7" width="1.7" height="1.7" fill="#fff"/></svg>
<span class="t" style="left:28px;top:28px;letter-spacing:-.06px">Scaling on your main display is set to 125%. You may experience layout inconsistencies when you run the application.</span>
<span class="t" style="left:659.5px;top:28px;color:#0f5fc0;letter-spacing:-.35px">Learn more...</span>
<svg style="left:895px;top:31px" width="9" height="9" viewBox="0 0 9 9"><path d="M.6 .6 L8.4 8.4 M8.4 .6 L.6 8.4" stroke="#8a6a1a" stroke-width="1.2"/></svg>
<!-- designer surface -->
<div class="a" style="left:0;top:48px;width:913.5px;height:558px;background:#f6f5fa"></div>
<!-- FORM -->
<div class="a" id="form" style="left:14px;top:64px;width:657px;height:399px;border:1px solid #474e60;border-right-color:#0e2438;border-bottom-color:#0e2438;border-radius:7px 7px 0 0;background:#bbd1ec;overflow:hidden">
 <div class="a" style="left:0;top:0;width:655px;height:29px;background:linear-gradient(#9ab5d8,#a9c2e1 40%,#bfd3ec)"></div>
 <div class="a" style="left:0;top:30px;width:7px;height:367px;background:linear-gradient(#c6d8ef,#b4cdea 25%,#bdd4ef)"></div>
 <div class="a" style="left:648px;top:30px;width:7px;height:367px;background:linear-gradient(#c6d8ef,#b4cdea 25%,#bdd4ef)"></div>
 <div class="a" style="left:652.5px;top:30px;width:2.5px;height:367px;background:#a5d5f6"></div>
 <div class="a" style="left:0;top:394.5px;width:655px;height:2.5px;background:#a5d5f6"></div>
 <div class="a" style="left:0;top:0;width:655px;height:1px;background:#dbe7f5"></div>
 <!-- client -->
 <div class="a" style="left:6px;top:29px;width:644px;height:362px;background:#f1f0f3;border:1px solid #d9e2ef"></div>
 <!-- title icon -->
 <svg style="left:9px;top:12px" width="13" height="12" viewBox="0 0 13 12"><rect x="4.6" y=".4" width="8" height="6.6" fill="#222"/><rect x=".4" y="3.6" width="3.6" height="6.4" fill="#222"/><rect x="5" y="8" width="5.6" height="3" fill="#222"/></svg>
 <span class="t" style="left:27px;top:10px">Form1</span>
 <!-- caption buttons -->
 <div class="a" style="left:543.5px;top:7px;width:33px;height:20px;border:1px solid #7d92b4;border-radius:2px;box-shadow:inset 0 0 0 1px rgba(225,236,250,.75);background:linear-gradient(#c3d4ea,#b2c7e3 48%,#9bb3d4 52%,#aec4e0)"></div>
 <div class="a" style="left:553px;top:16px;width:13px;height:5px;background:#f4f6fa;border:1px solid #6b7894"></div>
 <div class="a" style="left:578.5px;top:7px;width:33px;height:20px;border:1px solid #7d92b4;border-radius:2px;box-shadow:inset 0 0 0 1px rgba(225,236,250,.75);background:linear-gradient(#c3d4ea,#b2c7e3 48%,#9bb3d4 52%,#aec4e0)"></div>
 <div class="a" style="left:588.5px;top:10.5px;width:13px;height:12px;background:#f4f6fa;border:1px solid #6b7894"></div>
 <div class="a" style="left:591.5px;top:14px;width:7px;height:5.5px;background:#9ab1d2;border:1px solid #6b7894"></div>
 <div class="a" style="left:613.5px;top:7px;width:34px;height:20px;border:1px solid #73352a;border-radius:2px;box-shadow:inset 0 0 0 1px rgba(250,200,180,.5);background:linear-gradient(#eba78f,#e08c6e 46%,#cf5a33 52%,#c9532e 80%,#d67850)"></div>
 <svg style="left:623px;top:11px" width="15" height="12" viewBox="0 0 15 12"><path d="M2.4 1.6 L12.6 10.4 M12.6 1.6 L2.4 10.4" stroke="#4b2a2a" stroke-width="4.4"/><path d="M2.4 1.6 L12.6 10.4 M12.6 1.6 L2.4 10.4" stroke="#fff" stroke-width="2.6"/></svg>
 <!-- buttons -->
 <div class="a" style="left:207px;top:136.5px;width:228px;height:42.3px;background:#e1e0e2;border:1px solid #c0c0c0"></div>
 <span class="t" style="left:207px;width:228px;top:150px;text-align:center;color:#f2371f">Red</span>
 <div class="a" style="left:207px;top:202.5px;width:228px;height:43.2px;background:#e1e0e2;border:1px solid #c0c0c0"></div>
 <span class="t" style="left:207px;width:228px;top:216.5px;text-align:center;color:#1c22d8">Blue</span>
 <div class="a" style="left:207.5px;top:263.5px;width:231.5px;height:49.5px;border:1px dotted #a2a2a2"></div>
 <div class="a" style="left:210px;top:266.5px;width:225.5px;height:43px;background:#e1e0e2;border:1px solid #c0c0c0"></div>
 <span class="t" style="left:211px;width:225px;top:281px;text-align:center;color:#262626">Black</span>
 <!-- handles -->
 <div class="h" style="left:204px;top:260px"></div><div class="h" style="left:319.5px;top:260px"></div><div class="h" style="left:434.5px;top:260px"></div>
 <div class="h" style="left:434.5px;top:285.5px"></div>
 <div class="h" style="left:204px;top:309.5px"></div><div class="h" style="left:319.5px;top:309.5px"></div><div class="h" style="left:434.5px;top:309.5px"></div>
 <!-- resize cursor -->
 <svg style="left:198px;top:283px" width="19" height="11" viewBox="0 0 19 11"><path d="M.8 5.5 L5 1.2 V3.8 H14 V1.2 L18.2 5.5 L14 9.8 V7.2 H5 V9.8 Z" fill="#fff" stroke="#1e1e1e" stroke-width="1"/><rect x="6.4" y="2.4" width="6.2" height="6.2" rx="1" fill="#fff" stroke="#1e1e1e" stroke-width="1"/></svg>
</div>
</div>
<!-- OUTPUT -->
<div class="a" id="output" style="left:238.5px;top:685px;width:913.5px;height:69px;overflow:hidden">
<div class="ttl" style="left:0;top:0;width:913.5px"><span class="t" style="left:3px">Output</span></div>
<svg style="left:864px;top:7px" width="8" height="5" viewBox="0 0 8 5"><path d="M0 0 H8 L4 4.6 Z" fill="#a9b6dc"/></svg>
<svg style="left:880px;top:4px" width="7" height="12" viewBox="0 0 7 12"><path d="M1.4 .5 H5.6 M1.8 .5 V5.6 M5.2 .5 V5.6 M0 6 H7 M3.5 6 V11.5 M4.3 .5 V5.6" fill="none" stroke="#b4c0e2" stroke-width="1"/></svg>
<svg style="left:896px;top:5px" width="10" height="10" viewBox="0 0 10 10"><path d="M.6 .6 L9.4 9.4 M9.4 .6 L.6 9.4" stroke="#b4c0e2" stroke-width="1.2"/></svg>
<div class="tb" style="left:0;top:21px;width:913.5px;height:26px"></div>
<span class="t" style="left:6.5px;top:27px;letter-spacing:.15px">Show output from:</span>
<div class="a" style="left:111px;top:24px;width:302px;height:20px;background:#f3f5fb;border:1px solid #f7f8fd"></div>
<span class="t" style="left:116px;top:27px">Debug</span>
<div class="caret" style="left:401.5px;top:32px;border-left-width:3px;border-right-width:3px;border-top-width:3.5px"></div>
<div class="a" style="left:420px;top:25px;width:1px;height:18px;background:#a9b3d1"></div>
<svg style="left:427px;top:27px" width="15" height="14" viewBox="0 0 15 14"><path d="M5 1 V8 H8 M0 10.5 H15 M2 13 H13" fill="none" stroke="#aeb7d3" stroke-width="1.3"/></svg>
<div class="a" style="left:449px;top:25px;width:1px;height:18px;background:#a9b3d1"></div>
<svg style="left:456px;top:27px" width="15" height="14" viewBox="0 0 15 14"><path d="M7 2 H1 M3 0 L1 2 L3 4 M2 8.5 H14 M2 12 H14" fill="none" stroke="#aeb7d3" stroke-width="1.3"/></svg>
<svg style="left:477px;top:27px" width="15" height="14" viewBox="0 0 15 14"><path d="M7 2 H13 M11 0 L13 2 L11 4 M1 8.5 H13 M1 12 H13" fill="none" stroke="#aeb7d3" stroke-width="1.3"/></svg>
<div class="a" style="left:499px;top:25px;width:1px;height:18px;background:#a9b3d1"></div>
<svg style="left:507px;top:26px" width="16" height="15" viewBox="0 0 16 15"><path d="M7.5 1.5 H15.5 M7.5 4.5 H15.5 M7.5 7.5 H15.5 M1.5 10.5 H15.5 M1.5 13.5 H15.5" stroke="#2b2b2b" stroke-width="1.3"/><path d="M.8 1 L5.2 6 M5.2 1 L.8 6" stroke="#c8261c" stroke-width="1.5"/></svg>
<div class="a" style="left:530px;top:25px;width:1px;height:18px;background:#a9b3d1"></div>
<svg style="left:537px;top:26px" width="16" height="15" viewBox="0 0 16 15"><text x="0" y="6" font-family="Liberation Sans" font-size="7.5" font-weight="bold" fill="#2b2b2b">ab</text><text x="0" y="12.5" font-family="Liberation Sans" font-size="7" font-weight="bold" fill="#2b2b2b">c</text><path d="M11 3 H14.5 V11 H6 M8.6 8.2 L5.6 11 L8.6 13.8" fill="none" stroke="#2f6cc0" stroke-width="1.5"/></svg>
<div class="a" style="left:560px;top:25px;width:1px;height:18px;background:#a9b3d1"></div>
<svg style="left:566.5px;top:26px" width="16" height="16" viewBox="0 0 16 16"><circle cx="8" cy="8" r="6.8" fill="none" stroke="#2b2b2b" stroke-width="1.4"/><path d="M8 3.8 V8.4 H11.6" fill="none" stroke="#2b2b2b" stroke-width="1.4"/></svg>
<div class="a" style="left:0;top:47px;width:913.5px;height:22px;background:#ececec"></div>
<span class="t" style="left:12.5px;top:43.5px;font-family:'Liberation Mono',monospace;font-size:10.68px;color:#1e1e1e">The program '[34688] Project_Change_Colors.exe' has exited with code 4294967295 (0xffffffff).</span>
<svg style="left:894px;top:55px" width="20" height="14" viewBox="0 0 20 14"><path d="M5.5 5 L10 0 L14.5 5 Z" fill="#a9abb3"/><path d="M0 8.5 H20" stroke="#2b3fb8" stroke-width="1.6"/><path d="M6 12.5 H14" stroke="#8d909a" stroke-width="1.2"/></svg>
</div>
<!-- SOLUTION EXPLORER -->
<div class="a" id="solexp" style="left:1160px;top:71px;width:348px;height:276px;overflow:hidden">
<div class="ttl" style="left:0;top:0;width:348px"><span class="t" style="left:3.5px">Solution Explorer</span></div>
<svg style="left:302px;top:7px" width="8" height="5" viewBox="0 0 8 5"><path d="M0 0 H8 L4 4.6 Z" fill="#a9b6dc"/></svg>
<svg style="left:315px;top:4px" width="7" height="12" viewBox="0 0 7 12"><path d="M1.4 .5 H5.6 M1.8 .5 V5.6 M5.2 .5 V5.6 M0 6 H7 M3.5 6 V11.5 M4.3 .5 V5.6" fill="none" stroke="#b4c0e2" stroke-width="1"/></svg>
<svg style="left:331px;top:5px" width="10" height="10" viewBox="0 0 10 10"><path d="M.6 .6 L9.4 9.4 M9.4 .6 L.6 9.4" stroke="#b4c0e2" stroke-width="1.2"/></svg>
<div class="tb" style="left:0;top:21px;width:348px;height:49px"></div>
<!-- toolbar icons -->
<svg style="left:6px;top:27px" width="17" height="16" viewBox="0 0 17 16"><rect x="7.5" y="1" width="8" height="10.4" fill="#f4f6fc" stroke="#2b2b2b" stroke-width="1.1"/><path d="M9.4 3.6 H13.6 M9.4 6 H13.6 M9.4 8.4 H13.6" stroke="#2b2b2b" stroke-width="1"/><path d="M6.6 7.2 L8.8 8.2 V14.6 L6.6 15.6 L2.8 12 L1.2 13.2 L.4 12.8 V10 L1.2 9.6 L2.8 10.8 Z M6.6 9.6 L4.4 11.4 L6.6 13.2 Z" fill="#7d3ec6" fill-rule="evenodd"/></svg>
<div class="a" style="left:29px;top:25px;width:1px;height:19px;background:#a9b3d1"></div>
<svg style="left:36px;top:27px" width="17" height="16" viewBox="0 0 17 16"><path d="M.2 .6 H5 L2.6 3.6 Z" fill="#2f6cc0"/><circle cx="10" cy="9.4" r="5.6" fill="none" stroke="#2b2b2b" stroke-width="1.3"/><path d="M10 6 V9.8 H13" fill="none" stroke="#2b2b2b" stroke-width="1.2"/></svg>
<div class="caret" style="left:58.5px;top:33.5px;border-left-width:3px;border-right-width:3px;border-top-width:3.5px"></div>
<svg style="left:70px;top:29px" width="14" height="11" viewBox="0 0 14 11"><path d="M0 3.5 H13 M9.6 .6 L13 3.5 M14 7.5 H1 M4.4 10.4 L1 7.5" fill="none" stroke="#2b2b2b" stroke-width="1.2"/></svg>
<svg style="left:92px;top:27px" width="15" height="15" viewBox="0 0 15 15"><path d="M3 3 V.8 H14.2 V12 H12" fill="none" stroke="#2b2b2b" stroke-width="1.1"/><rect x=".8" y="3" width="11.2" height="11.2" fill="none" stroke="#2b2b2b" stroke-width="1.2"/><path d="M3.4 8.6 H9.4" stroke="#2b2b2b" stroke-width="1.2"/></svg>
<svg style="left:113px;top:27px" width="15" height="15" viewBox="0 0 15 15"><rect x="5" y=".8" width="9.2" height="9.6" fill="none" stroke="#2b2b2b" stroke-width="1.1"/><rect x="2.8" y="3" width="9.2" height="9.6" fill="#ccd5f0" stroke="#2b2b2b" stroke-width="1.1"/><rect x=".8" y="5.2" width="8.8" height="9.2" fill="#ccd5f0" stroke="#2b2b2b" stroke-width="1.1"/></svg>
<div class="a" style="left:136px;top:25px;width:1px;height:19px;background:#a9b3d1"></div>
<div class="a" style="left:141px;top:23.5px;width:22px;height:22px;background:#fae3b0;border:1px solid #e0b055"></div>
<svg style="left:145.5px;top:28px" width="13" height="13" viewBox="0 0 13 13"><rect x=".2" y=".2" width="2.6" height="2.6" fill="#1e1e1e"/><path d="M1.5 3 V5 M3 5 H5.4 M5.4 3.4 V8.4 H7.6" fill="none" stroke="#1e1e1e" stroke-width="1"/><rect x="4" y="3.4" width="3" height="3" fill="#fbe7b4" stroke="#1e1e1e" stroke-width="1"/><rect x="7.8" y="7.4" width="4.4" height="4.4" fill="#fbe7b4" stroke="#1e1e1e" stroke-width="1"/></svg>
<div class="caret" style="left:166.5px;top:33.5px;border-left-width:3px;border-right-width:3px;border-top-width:3.5px"></div>
<div class="a" style="left:177.5px;top:25px;width:1px;height:19px;background:#a9b3d1"></div>
<svg style="left:185px;top:27px" width="15" height="15" viewBox="0 0 15 15"><path d="M10.4 .8 C8 .4 6 2.4 6.6 5 L.8 11.6 C.2 12.8 2 14.6 3.2 14 L9.8 8.2 C12.4 8.8 14.4 6.8 14 4.4 L11.6 6.6 L9.4 5.4 L8.4 3.2 Z" fill="#2b2b2b"/></svg>
<div class="a" style="left:204px;top:23.5px;width:22px;height:22px;background:#fae3b0;border:1px solid #e0b055"></div>
<svg style="left:208px;top:28px" width="15" height="13" viewBox="0 0 15 13"><rect x=".6" y="6.6" width="9.4" height="3" fill="#fbe7b4" stroke="#1e1e1e" stroke-width="1.1"/><path d="M.2 11.6 H11" stroke="#1e1e1e" stroke-width="1.2"/><path d="M11.4 2 L12.4 3.4 M13 6 H14.6 M12 8.6 L13 9.8 M10 1 V2.6" stroke="#b5832a" stroke-width="1"/></svg>
<!-- search -->
<div class="a" style="left:2.5px;top:48.5px;width:343px;height:21px;background:#fdfdff;border:1px solid #b5bfdc"></div>
<span class="t" style="left:6.5px;top:51.5px;color:#7b7f8c;letter-spacing:-.08px">Search Solution Explorer (Ctrl+;)</span>
<svg style="left:317px;top:53px" width="13" height="13" viewBox="0 0 13 13"><circle cx="8" cy="4.8" r="3.6" fill="none" stroke="#5a5a5a" stroke-width="1.5"/><path d="M5.4 7.6 L1 12" stroke="#5a5a5a" stroke-width="2"/></svg>
<div class="a" style="left:332px;top:50.5px;width:1px;height:18px;background:#c3cbe2"></div>
<div class="caret" style="left:335.5px;top:59px"></div>
<!-- tree -->
<div class="pane" style="left:0;top:71px;width:348px;height:186px"></div>
<div class="a" style="left:0;top:91px;width:348px;height:19.5px;background:#e9eaf1"></div>
<!-- row 1 solution -->
<svg style="left:15px;top:74px" width="16" height="15" viewBox="0 0 16 15"><path d="M6 11 H.8 V1 H13.8 V6" fill="none" stroke="#5a5a5a" stroke-width="1.1"/><rect x=".8" y="1" width="13" height="2" fill="#5a5a5a"/><path d="M12.6 6.4 L15 7.4 V13.6 L12.6 14.6 L8.6 11 L6.8 12.4 L6 12 V9 L6.8 8.6 L8.6 10 Z M12.6 8.8 L10.4 10.5 L12.6 12.2 Z" fill="#7d3ec6" fill-rule="evenodd"/></svg>
<span class="t" style="left:35.5px;top:73.5px;letter-spacing:-.09px">Solution 'Project_Change_Colors' (1 of 1 project)</span>
<!-- row 2 project -->
<svg style="left:11px;top:97px" width="7" height="7" viewBox="0 0 7 7"><path d="M6.5 .5 V6.5 H.5 Z" fill="#1e1e1e"/></svg>
<svg style="left:33px;top:94px" width="15" height="13" viewBox="0 0 15 13"><rect x=".6" y=".6" width="13.8" height="11.8" fill="#e8eefb" stroke="#6a6a6a" stroke-width="1.1"/><text x="2.2" y="9.8" font-family="Liberation Sans" font-size="8" font-weight="bold" fill="#2f6cc0">VB</text></svg>
<span class="t b" style="left:53.5px;top:93.5px;letter-spacing:-.48px">Project_Change_Colors</span>
<!-- row 3 dependencies -->
<svg style="left:29px;top:115px" width="7" height="9" viewBox="0 0 7 9"><path d="M.8 .8 L5.6 4.5 L.8 8.2 Z" fill="none" stroke="#3c3c3c" stroke-width="1.1"/></svg>
<svg style="left:50px;top:114px" width="16" height="12" viewBox="0 0 16 12"><rect x="1" y="4.6" width="4.6" height="4" fill="none" stroke="#2b2b2b" stroke-width="1.1"/><rect x="9" y="1" width="5.6" height="3.6" fill="none" stroke="#2b2b2b" stroke-width="1.1"/><rect x="9" y="7" width="5.6" height="3.6" fill="none" stroke="#2b2b2b" stroke-width="1.1"/><path d="M5.6 6.6 H7.4 V2.8 H9 M7.4 6.6 V8.8 H9 M0 6.6 H1" fill="none" stroke="#2b2b2b" stroke-width="1"/></svg>
<span class="t" style="left:71.5px;top:112.7px">Dependencies</span>
<!-- row 4 my project -->
<svg style="left:50px;top:132px" width="16" height="15" viewBox="0 0 16 15"><path d="M3 1.6 H7 L8.2 2.8 H15 V11.6 H3 Z" fill="#dcb67a" stroke="#b98b3a" stroke-width=".9"/><path d="M5.4 6.4 C4 6 2.4 7.2 2.8 8.8 L.2 11.6 C-.4 12.8 1.2 14.4 2.4 13.8 L5 11 C6.6 11.4 8 10 7.6 8.6 L6.2 9.8 L5 9.2 L4.4 8 Z" fill="#2b2b2b" transform="translate(.8,.4)"/></svg>
<span class="t" style="left:71.5px;top:131.5px">My Project</span>
<!-- row 5 appevents -->
<svg style="left:29px;top:154px" width="7" height="9" viewBox="0 0 7 9"><path d="M.8 .8 L5.6 4.5 L.8 8.2 Z" fill="none" stroke="#3c3c3c" stroke-width="1.1"/></svg>
<span class="t b" style="left:51px;top:151px;font-size:11.5px;color:#2f78cf">VB</span>
<span class="t" style="left:71.5px;top:151.7px">ApplicationEvents.vb</span>
<!-- row 6 form1.vb -->
<svg style="left:29px;top:174.5px" width="7" height="7" viewBox="0 0 7 7"><path d="M6.5 .5 V6.5 H.5 Z" fill="#1e1e1e"/></svg>
<svg style="left:51px;top:171.5px" width="15" height="14" viewBox="0 0 15 14"><rect x=".6" y=".6" width="13.8" height="12.4" fill="#f4f6fc" stroke="#4a4a4a" stroke-width="1.1"/><rect x=".6" y=".6" width="13.8" height="3" fill="#4a4a4a"/><rect x="2.6" y="6.6" width="4" height="4" fill="none" stroke="#7d3ec6" stroke-width="1.1"/><rect x="8.4" y="6" width="4" height="2.6" fill="#7d3ec6"/></svg>
<span class="t" style="left:71.5px;top:170.8px">Form1.vb</span>
<!-- row 7 designer -->
<svg style="left:47px;top:192.5px" width="7" height="9" viewBox="0 0 7 9"><path d="M.8 .8 L5.6 4.5 L.8 8.2 Z" fill="none" stroke="#3c3c3c" stroke-width="1.1"/></svg>
<span class="t b" style="left:69px;top:190px;font-size:11.5px;color:#2f78cf">VB</span>
<span class="t" style="left:89px;top:189.5px;letter-spacing:-.15px">Form1.Designer.vb</span>
<!-- row 8 resx -->
<svg style="left:70px;top:210px" width="12" height="14" viewBox="0 0 12 14"><path d="M3.6 3 V.8 H8.6 L11 3.2 V10.4 H8.4" fill="none" stroke="#2b2b2b" stroke-width="1.1"/><path d="M.8 3.4 H5.6 L8 5.8 V13.2 H.8 Z" fill="#f4f6fc" stroke="#2b2b2b" stroke-width="1.2"/><path d="M5.4 3.4 V6 H8" fill="none" stroke="#2b2b2b" stroke-width="1"/></svg>
<span class="t" style="left:89px;top:209px;letter-spacing:-.25px">Form1.resx</span>
<!-- bottom tabs -->
<div class="pane" style="left:0;top:256px;width:101.5px;height:19.5px"></div>
<span class="t" style="left:4.5px;top:259px">Solution Explorer</span>
<div class="a" style="left:101.5px;top:257px;width:74px;height:18.5px;background:#40568d"></div>
<span class="t" style="left:107.5px;top:259px;color:#e6ebfa">Git Changes</span>
</div>
<!-- PROPERTIES -->
<div class="a" id="props" style="left:1160px;top:355px;width:348px;height:399px;overflow:hidden">
<div class="ttl" style="left:0;top:0;width:348px"><span class="t" style="left:3.5px">Properties</span></div>
<svg style="left:302px;top:7px" width="8" height="5" viewBox="0 0 8 5"><path d="M0 0 H8 L4 4.6 Z" fill="#a9b6dc"/></svg>
<svg style="left:315px;top:4px" width="7" height="12" viewBox="0 0 7 12"><path d="M1.4 .5 H5.6 M1.8 .5 V5.6 M5.2 .5 V5.6 M0 6 H7 M3.5 6 V11.5 M4.3 .5 V5.6" fill="none" stroke="#b4c0e2" stroke-width="1"/></svg>
<svg style="left:331px;top:5px" width="10" height="10" viewBox="0 0 10 10"><path d="M.6 .6 L9.4 9.4 M9.4 .6 L.6 9.4" stroke="#b4c0e2" stroke-width="1.2"/></svg>
<div class="pane" style="left:0;top:21px;width:348px;height:23px;background:#f9faff"></div>
<span class="t b" style="left:7px;top:25px">Button3</span>
<span class="t" style="left:59.5px;top:25px;letter-spacing:-.21px">System.Windows.Forms.Button</span>
<div class="caret" style="left:337px;top:31.5px;border-left-width:3px;border-right-width:3px;border-top-width:3.5px"></div>
<div class="tb" style="left:0;top:44px;width:348px;height:27px"></div>
<div class="a" style="left:3px;top:45px;width:23px;height:23px;background:#fae3b0;border:1px solid #e0b055"></div>
<svg style="left:7px;top:49px" width="15" height="14" viewBox="0 0 15 14"><g fill="#1e1e1e"><rect x="0" y="0" width="4" height="3.6"/><rect x="0" y="9.4" width="4" height="3.6"/></g><rect x=".5" y=".5" width="3" height="2.6" fill="#fbe7b4" stroke="#1e1e1e" stroke-width="1"/><rect x=".5" y="9.9" width="3" height="2.6" fill="#fbe7b4" stroke="#1e1e1e" stroke-width="1"/><path d="M6 1 H14 M6 3.6 H11 M6 6.4 H14 M6 9.2 H11 M6 11.8 H14" stroke="#1e1e1e" stroke-width="1.1" stroke-dasharray="1.6 .8"/></svg>
<svg style="left:31px;top:49px" width="17" height="14" viewBox="0 0 17 14"><text x="0" y="6" font-family="Liberation Sans" font-size="7.5" font-weight="bold" fill="#1e1e1e">A</text><text x="0" y="13.5" font-family="Liberation Sans" font-size="7.5" font-weight="bold" fill="#1e1e1e">Z</text><rect x="0" y="0" width="6" height="13.6" fill="none"/><path d="M10.6 .6 V11.6 M7.4 8.6 L10.6 12 L13.8 8.6" fill="none" stroke="#2f6cc0" stroke-width="1.8"/></svg>
<div class="a" style="left:54px;top:45px;width:24px;height:23px;background:#fae3b0;border:1px solid #e0b055"></div>
<svg style="left:59px;top:48.5px" width="14" height="15" viewBox="0 0 14 15"><path d="M4 2 H9.6 L12.8 5.2 V14 H2.6 V9.6" fill="#fdf6e2" stroke="#1e1e1e" stroke-width="1.1"/><path d="M5.2 2 C2.6 .8 .4 3.2 1.4 5.6 L4.4 8.4 L5.6 7.2 L3 4.4 C3 3.4 3.6 3 4.6 3.2 Z" fill="#1e1e1e"/><path d="M5 8 L7.2 10.4" stroke="#1e1e1e" stroke-width="1.6"/></svg>
<svg style="left:84px;top:48px" width="12" height="16" viewBox="0 0 12 16"><path d="M7.4 .4 L1.4 8.6 H5.4 L3.6 15.6 L10.8 6.4 H6.6 L9.6 .4 Z" fill="#e8a020" stroke="#b5700e" stroke-width=".8"/></svg>
<div class="a" style="left:102.5px;top:47px;width:1px;height:19px;background:#a9b3d1"></div>
<svg style="left:110px;top:49px" width="14" height="14" viewBox="0 0 15 15"><path d="M10.4 .8 C8 .4 6 2.4 6.6 5 L.8 11.6 C.2 12.8 2 14.6 3.2 14 L9.8 8.2 C12.4 8.8 14.4 6.8 14 4.4 L11.6 6.6 L9.4 5.4 L8.4 3.2 Z" fill="#9a9ea9"/></svg>
<div class="pane" style="left:0;top:71px;width:348px;height:313px"></div>
<div class="a" style="left:330px;top:71px;width:18px;height:308px;background:#e8e9f1"></div>
<div class="a" style="left:335px;top:122px;width:8px;height:77px;background:#c2c3c9"></div>
<svg style="left:334.5px;top:77px" width="9" height="5" viewBox="0 0 9 5"><path d="M0 5 L4.5 0 L9 5 Z" fill="#9ea1ab"/></svg>
<svg style="left:334.5px;top:366px" width="9" height="5" viewBox="0 0 9 5"><path d="M0 0 L4.5 5 L9 0 Z" fill="#9ea1ab"/></svg>
<div class="a" style="left:0;top:71px;width:14.5px;height:308px;background:#f3f4f9"></div>
<div class="a" style="left:14.5px;top:89.8px;width:315.5px;height:1px;background:#f2f3f8"></div>
<span class="t" style="left:18px;top:72.6px;letter-spacing:0px;width:125.5px;overflow:hidden">BackgroundImageLayout</span>
<span class="t" style="left:147.5px;top:72.6px;letter-spacing:0px">Tile</span>
<div class="a" style="left:14.5px;top:108.3px;width:315.5px;height:1px;background:#f2f3f8"></div>
<span class="t" style="left:18px;top:91.1px;letter-spacing:0px;width:125.5px;overflow:hidden">Cursor</span>
<span class="t" style="left:147.5px;top:91.1px;letter-spacing:0px">Default</span>
<div class="a" style="left:14.5px;top:126.8px;width:315.5px;height:1px;background:#f2f3f8"></div>
<svg style="left:3.5px;top:112.5px" width="9" height="9" viewBox="0 0 9 9"><rect x=".5" y=".5" width="8" height="8" fill="#fff" stroke="#4a4a4a" stroke-width="1"/><path d="M2 4.5 H7 M4.5 2 V7" stroke="#1e1e1e" stroke-width="1"/></svg>
<span class="t" style="left:18px;top:109.5px;letter-spacing:0px;width:125.5px;overflow:hidden">FlatAppearance</span>
<div class="a" style="left:14.5px;top:145.2px;width:315.5px;height:1px;background:#f2f3f8"></div>
<span class="t" style="left:18px;top:128.0px;letter-spacing:0px;width:125.5px;overflow:hidden">FlatStyle</span>
<span class="t" style="left:147.5px;top:128.0px;letter-spacing:0px">Standard</span>
<div class="a" style="left:14.5px;top:163.7px;width:315.5px;height:1px;background:#f2f3f8"></div>
<svg style="left:3.5px;top:149.5px" width="9" height="9" viewBox="0 0 9 9"><rect x=".5" y=".5" width="8" height="8" fill="#fff" stroke="#4a4a4a" stroke-width="1"/><path d="M2 4.5 H7 M4.5 2 V7" stroke="#1e1e1e" stroke-width="1"/></svg>
<span class="t" style="left:18px;top:146.5px;letter-spacing:0px;width:125.5px;overflow:hidden">Font</span>
<span class="t" style="left:147.5px;top:146.5px;letter-spacing:0px">Segoe UI, 9pt</span>
<div class="a" style="left:14.5px;top:164.5px;width:130px;height:18.5px;background:#ecedf3"></div>
<div class="a" style="left:14.5px;top:182.2px;width:315.5px;height:1px;background:#f2f3f8"></div>
<span class="t" style="left:18px;top:165.0px;letter-spacing:0px;width:125.5px;overflow:hidden">ForeColor</span>
<div class="a" style="left:146px;top:164.9px;width:20px;height:15.5px;background:#000;border:1px solid #1e1e1e"></div>
<span class="t b" style="left:173px;top:165.0px;letter-spacing:0px">Black</span>
<div class="a" style="left:14.5px;top:200.7px;width:315.5px;height:1px;background:#f2f3f8"></div>
<span class="t" style="left:18px;top:183.4px;letter-spacing:0px;width:125.5px;overflow:hidden">Image</span>
<div class="a" style="left:146px;top:183.3px;width:20px;height:15.5px;background:#fff;border:1px solid #1e1e1e"></div>
<span class="t" style="left:173px;top:183.4px;letter-spacing:0px">(none)</span>
<div class="a" style="left:14.5px;top:219.1px;width:315.5px;height:1px;background:#f2f3f8"></div>
<span class="t" style="left:18px;top:201.9px;letter-spacing:0px;width:125.5px;overflow:hidden">ImageAlign</span>
<span class="t" style="left:147.5px;top:201.9px;letter-spacing:0px">MiddleCenter</span>
<div class="a" style="left:14.5px;top:237.6px;width:315.5px;height:1px;background:#f2f3f8"></div>
<span class="t" style="left:18px;top:220.4px;letter-spacing:0px;width:125.5px;overflow:hidden">ImageIndex</span>
<div class="a" style="left:146px;top:220.3px;width:20px;height:15.5px;background:#fff;border:1px solid #1e1e1e"></div>
<span class="t" style="left:173px;top:220.4px;letter-spacing:0px">(none)</span>
<div class="a" style="left:14.5px;top:256.1px;width:315.5px;height:1px;background:#f2f3f8"></div>
<span class="t" style="left:18px;top:238.8px;letter-spacing:0px;width:125.5px;overflow:hidden">ImageKey</span>
<div class="a" style="left:146px;top:238.7px;width:20px;height:15.5px;background:#fff;border:1px solid #1e1e1e"></div>
<span class="t" style="left:173px;top:238.8px;letter-spacing:0px">(none)</span>
<div class="a" style="left:14.5px;top:274.5px;width:315.5px;height:1px;background:#f2f3f8"></div>
<span class="t" style="left:18px;top:257.3px;letter-spacing:0px;width:125.5px;overflow:hidden">ImageList</span>
<span class="t" style="left:147.5px;top:257.3px;letter-spacing:0px">(none)</span>
<div class="a" style="left:14.5px;top:293.0px;width:315.5px;height:1px;background:#f2f3f8"></div>
<span class="t" style="left:18px;top:275.8px;letter-spacing:0px;width:125.5px;overflow:hidden">RightToLeft</span>
<span class="t" style="left:147.5px;top:275.8px;letter-spacing:0px">No</span>
<div class="a" style="left:14.5px;top:311.5px;width:315.5px;height:1px;background:#f2f3f8"></div>
<span class="t" style="left:18px;top:294.2px;letter-spacing:0px;width:125.5px;overflow:hidden">Text</span>
<span class="t b" style="left:147.5px;top:294.2px;letter-spacing:0px">Black</span>
<div class="a" style="left:14.5px;top:329.9px;width:315.5px;height:1px;background:#f2f3f8"></div>
<span class="t" style="left:18px;top:312.7px;letter-spacing:0px;width:125.5px;overflow:hidden">TextAlign</span>
<span class="t" style="left:147.5px;top:312.7px;letter-spacing:0px">MiddleCenter</span>
<div class="a" style="left:14.5px;top:348.4px;width:315.5px;height:1px;background:#f2f3f8"></div>
<span class="t" style="left:18px;top:331.2px;letter-spacing:0px;width:125.5px;overflow:hidden">TextImageRelation</span>
<span class="t" style="left:147.5px;top:331.2px;letter-spacing:0px">Overlay</span>
<div class="a" style="left:14.5px;top:366.9px;width:315.5px;height:1px;background:#f2f3f8"></div>
<span class="t" style="left:18px;top:349.6px;letter-spacing:0px;width:125.5px;overflow:hidden">UseMnemonic</span>
<span class="t" style="left:147.5px;top:349.6px;letter-spacing:0px">True</span>
<div class="a" style="left:14.5px;top:385.4px;width:315.5px;height:1px;background:#f2f3f8"></div>
<span class="t" style="left:18px;top:368.1px;letter-spacing:0px;width:125.5px;overflow:hidden">UseVisualStyleBackColor</span>
<span class="t b" style="left:147.5px;top:368.1px;letter-spacing:0px">True</span>
<div class="a" style="left:144.5px;top:71px;width:1px;height:308px;background:#f2f3f8"></div>
<div class="a" style="left:0;top:377.5px;width:348px;height:21.5px;background:#f7f8fc"></div>
<span class="t b" style="left:7px;top:385px;letter-spacing:-.4px;color:#111">ForeColor</span>
</div>
<!-- RIGHT STRIP -->
<div class="a" style="left:1534px;top:70px;width:6px;height:87px;background:#40568d"></div>
<div class="a" style="left:1528px;top:70px;width:90px;height:14px;transform-origin:0 0;transform:rotate(90deg);color:#eef1fb;line-height:14px;white-space:pre">Diagnostic Tools</div>
<!-- BOTTOM SHADOW OVERLAY -->
<div class="a" style="left:0;top:700px;width:1542px;height:54px;background:linear-gradient(rgba(0,0,0,0),rgba(0,0,0,.05) 35%,rgba(0,0,0,.17) 70%,rgba(0,0,0,.3));pointer-events:none"></div>
<div class="a" style="left:1539.5px;top:0;width:2.5px;height:754px;background:#f7f8fc"></div>
</div>
</body>
</html>
